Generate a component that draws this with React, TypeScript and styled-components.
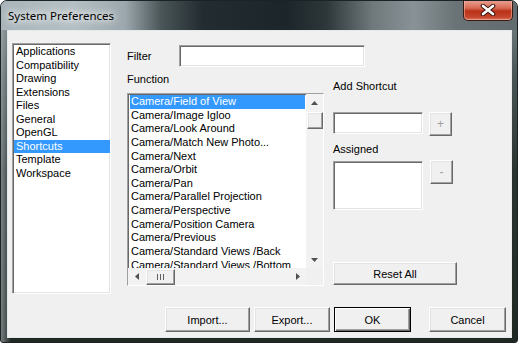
import styled, { createGlobalStyle, css } from "styled-components";

const GlobalStyle = createGlobalStyle`
  html, body {
    margin: 0;
    padding: 0;
    background: #ffffff;
  }
  body {
    width: 519px;
    height: 346px;
    overflow: hidden;
    font-family: "Liberation Sans", Arial, sans-serif;
    font-size: 11px;
    color: #000000;
  }
`;

const sunken = css`
  box-sizing: border-box;
  background: #ffffff;
  border: 1px solid;
  border-color: #a0a0a0 #ffffff #ffffff #a0a0a0;
  box-shadow: inset 1px 1px 0 #696969, inset -1px -1px 0 #e3e3e3;
`;

const raised = css`
  box-sizing: border-box;
  background: #f0f0f0;
  border: 1px solid;
  border-color: #ffffff #696969 #696969 #ffffff;
  box-shadow: inset -1px -1px 0 #a0a0a0, inset 1px 1px 0 #e3e3e3;
  font-family: "Liberation Sans", Arial, sans-serif;
  font-size: 11px;
  color: #000000;
  padding: 0;
`;

const Window = styled.div`
  width: 518px;
  height: 343px;
  box-sizing: border-box;
  border: 1px solid #1b2326;
  border-radius: 7px 7px 3px 3px;
  overflow: hidden;
  display: flex;
  flex-direction: column;
  background: linear-gradient(90deg, rgba(190, 199, 203, 0.55) 0%, rgba(190, 199, 203, 0) 2%),
    linear-gradient(180deg, #7d888c 0%, #4b5556 22%, #2a332f 50%, #1f2823 100%);
`;

const TitleBar = styled.div`
  height: 29px;
  flex: none;
  display: flex;
  align-items: flex-start;
  padding-left: 7px;
  background: linear-gradient(
    90deg,
    #a9b5ba 0%,
    #b5c0c4 14%,
    #9ca8ad 24%,
    #4b5659 31%,
    #232d31 39%,
    #1c2529 55%,
    #2d3639 63%,
    #6f797c 72%,
    #899296 80%,
    #6a7376 88%,
    #626c6f 100%
  );
`;

const Title = styled.div`
  font-family: "Noto Sans", "Open Sans", sans-serif;
  font-size: 11.5px;
  line-height: 29px;
  color: #000000;
  text-shadow: 0 0 6px #ffffff, 0 0 10px rgba(255, 255, 255, 0.9), 0 0 14px rgba(255, 255, 255, 0.7);
`;

const CloseButton = styled.div`
  margin-left: auto;
  margin-right: 4px;
  margin-top: -1px;
  width: 50px;
  height: 21px;
  box-sizing: border-box;
  border: 1px solid #3b1a14;
  border-top: none;
  border-radius: 0 0 5px 5px;
  background: linear-gradient(180deg, #e9a596 0%, #d86b55 40%, #b93219 55%, #c4452b 85%, #d8765e 100%);
  box-shadow: inset 0 0 0 1px rgba(255, 210, 200, 0.45);
  display: flex;
  align-items: center;
  justify-content: center;
`;

const Client = styled.div`
  flex: none;
  height: 308px;
  margin: 0 5px 0 6px;
  box-sizing: border-box;
  border: 1px solid #e4eaec;
  background: #f0f0f0;
  display: flex;
  flex-direction: column;
  padding: 12px 0 5px 4px;
`;

const Body = styled.div`
  height: 251px;
  display: flex;
`;

const SideList = styled.div`
  ${sunken};
  width: 99px;
  height: 251px;
  padding: 1px 0 0 1px;
  overflow: hidden;
`;

const ListItem = styled.div<{ $selected?: boolean }>`
  height: 13.5px;
  line-height: 13.5px;
  padding-left: 2px;
  white-space: nowrap;
  background: ${(p) => (p.$selected ? "#3399ff" : "transparent")};
  color: ${(p) => (p.$selected ? "#ffffff" : "#000000")};
`;

const Main = styled.div`
  margin-left: 16px;
  padding-top: 2px;
  display: flex;
  flex-direction: column;
`;

const FilterRow = styled.div`
  display: flex;
  align-items: center;
  height: 22px;
`;

const Label = styled.div<{ $width?: number; $top?: number }>`
  width: ${(p) => (p.$width ? `${p.$width}px` : "auto")};
  margin-top: ${(p) => p.$top ?? 0}px;
  line-height: 14px;
  white-space: nowrap;
`;

const TextBox = styled.div<{ $width: number; $height: number }>`
  ${sunken};
  width: ${(p) => p.$width}px;
  height: ${(p) => p.$height}px;
`;

const Columns = styled.div`
  display: flex;
  margin-top: 5px;
  gap: 9px;
`;

const Column = styled.div<{ $width: number }>`
  width: ${(p) => p.$width}px;
  display: flex;
  flex-direction: column;
`;

const FunctionBox = styled.div`
  ${sunken};
  margin-top: 7px;
  width: 197px;
  height: 193px;
  display: flex;
  flex-direction: column;
`;

const FunctionArea = styled.div`
  flex: 1;
  display: flex;
  min-height: 0;
`;

const FunctionItems = styled.div`
  flex: 1;
  overflow: hidden;
  padding: 1px 1px 0 2px;
  ${ListItem} {
    height: 13.65px;
    line-height: 13.65px;
    padding-left: 1px;
  }
`;

const Track = styled.div<{ $vertical?: boolean }>`
  flex: none;
  background: #f2f2f2;
  display: flex;
  flex-direction: ${(p) => (p.$vertical ? "column" : "row")};
  ${(p) => (p.$vertical ? "width: 17px;" : "height: 17px; flex: 1;")}
`;

const HRow = styled.div`
  height: 17px;
  display: flex;
`;

const Corner = styled.div`
  width: 17px;
  height: 17px;
  background: #f0f0f0;
`;

const Arrow = styled.div`
  width: 17px;
  height: 17px;
  flex: none;
  display: flex;
  align-items: center;
  justify-content: center;
`;

const Thumb = styled.div<{ $vertical?: boolean }>`
  ${raised};
  flex: none;
  ${(p) => (p.$vertical ? "width: 16px; height: 17px; margin: 1px 0 0 1px;" : "width: 29px; height: 16px; margin: 1px 0 0 1px;")}
  display: flex;
  align-items: center;
  justify-content: center;
`;

const Spacer = styled.div`
  flex: 1;
`;

const ControlRow = styled.div<{ $top: number; $gap: number }>`
  display: flex;
  align-items: flex-start;
  margin-top: ${(p) => p.$top}px;
  gap: ${(p) => p.$gap}px;
`;

const SmallButton = styled.button<{ $top?: number }>`
  ${raised};
  width: 23px;
  height: 24px;
  margin-top: ${(p) => p.$top ?? 0}px;
  color: #a0a0a0;
  font-size: 12px;
`;

const Button = styled.button<{ $width: number; $height?: number; $default?: boolean; $spaced?: boolean }>`
  ${raised};
  width: ${(p) => p.$width}px;
  height: ${(p) => p.$height ?? 25}px;
  margin-left: ${(p) => (p.$spaced ? 14 : 0)}px;
  ${(p) =>
    p.$default &&
    css`
      border: 1px solid #000000;
      box-shadow: inset 1px 1px 0 #ffffff, inset -1px -1px 0 #696969, inset -2px -2px 0 #a0a0a0;
    `}
`;

const Footer = styled.div`
  margin-top: 13px;
  display: flex;
  justify-content: flex-end;
  gap: 4px;
  padding-right: 5px;
`;

const sections = [
  "Applications",
  "Compatibility",
  "Drawing",
  "Extensions",
  "Files",
  "General",
  "OpenGL",
  "Shortcuts",
  "Template",
  "Workspace",
];

const functions = [
  "Camera/Field of View",
  "Camera/Image Igloo",
  "Camera/Look Around",
  "Camera/Match New Photo...",
  "Camera/Next",
  "Camera/Orbit",
  "Camera/Pan",
  "Camera/Parallel Projection",
  "Camera/Perspective",
  "Camera/Position Camera",
  "Camera/Previous",
  "Camera/Standard Views /Back",
  "Camera/Standard Views /Bottom",
];

function Tri({ dir }: { dir: "up" | "down" | "left" | "right" }) {
  const pts = {
    up: "0,4 7,4 3.5,0",
    down: "0,0 7,0 3.5,4",
    left: "4,0 4,7 0,3.5",
    right: "0,0 0,7 4,3.5",
  }[dir];
  const vertical = dir === "up" || dir === "down";
  return (
    <svg width={vertical ? 7 : 4} height={vertical ? 4 : 7}>
      <polygon points={pts} fill="#505050" />
    </svg>
  );
}

export default function App() {
  return (
    <>
      <GlobalStyle />
      <Window>
        <TitleBar>
          <Title>System Preferences</Title>
          <CloseButton>
            <svg width="16" height="12" viewBox="0 0 16 12">
              <path d="M3 2 L13 10 M13 2 L3 10" stroke="#3a1610" strokeWidth="4.6" strokeLinecap="round" />
              <path d="M3 2 L13 10 M13 2 L3 10" stroke="#ffffff" strokeWidth="2.6" strokeLinecap="round" />
            </svg>
          </CloseButton>
        </TitleBar>
        <Client>
          <Body>
            <SideList>
              {sections.map((s) => (
                <ListItem key={s} $selected={s === "Shortcuts"}>
                  {s}
                </ListItem>
              ))}
            </SideList>
            <Main>
              <FilterRow>
                <Label $width={52}>Filter</Label>
                <TextBox $width={186} $height={22} />
              </FilterRow>
              <Columns>
                <Column $width={197}>
                  <Label>Function</Label>
                  <FunctionBox>
                    <FunctionArea>
                      <FunctionItems>
                        {functions.map((f, i) => (
                          <ListItem key={f} $selected={i === 0}>
                            {f}
                          </ListItem>
                        ))}
                      </FunctionItems>
                      <Track $vertical>
                        <Arrow>
                          <Tri dir="up" />
                        </Arrow>
                        <Thumb $vertical />
                        <Spacer />
                        <Arrow>
                          <Tri dir="down" />
                        </Arrow>
                      </Track>
                    </FunctionArea>
                    <HRow>
                      <Track>
                        <Arrow>
                          <Tri dir="left" />
                        </Arrow>
                        <Thumb>
                          <svg width="7" height="6">
                            <path d="M0.5 0 V6 M3.5 0 V6 M6.5 0 V6" stroke="#606060" strokeWidth="1" />
                          </svg>
                        </Thumb>
                        <Spacer />
                        <Arrow>
                          <Tri dir="right" />
                        </Arrow>
                      </Track>
                      <Corner />
                    </HRow>
                  </FunctionBox>
                </Column>
                <Column $width={124}>
                  <Label $top={7}>Add Shortcut</Label>
                  <ControlRow $top={19} $gap={6}>
                    <TextBox $width={90} $height={22} />
                    <SmallButton>+</SmallButton>
                  </ControlRow>
                  <Label $top={6}>Assigned</Label>
                  <ControlRow $top={5} $gap={7}>
                    <TextBox $width={90} $height={49} />
                    <SmallButton $top={-1}>-</SmallButton>
                  </ControlRow>
                  <ControlRow $top={52} $gap={0}>
                    <Button $width={124} $height={23}>
                      Reset All
                    </Button>
                  </ControlRow>
                </Column>
              </Columns>
            </Main>
          </Body>
          <Footer>
            <Button $width={85}>Import...</Button>
            <Button $width={76}>Export...</Button>
            <Button $width={77} $default>
              OK
            </Button>
            <Button $width={77} $spaced>
              Cancel
            </Button>
          </Footer>
        </Client>
      </Window>
    </>
  );
}
